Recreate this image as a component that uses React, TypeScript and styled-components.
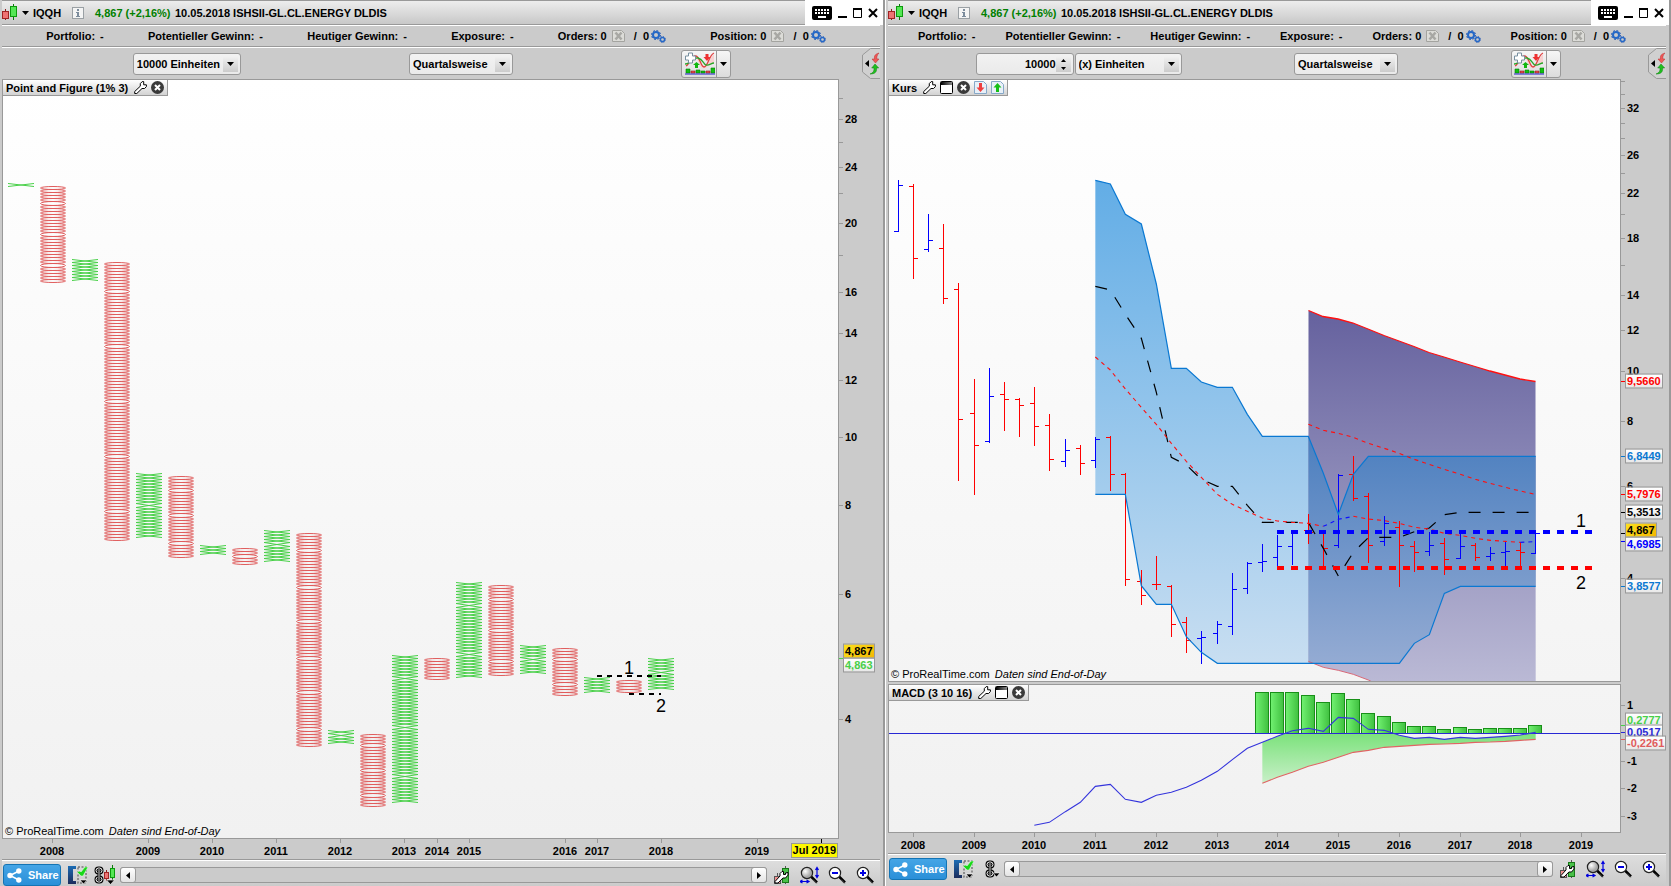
import React from "react";
import styled, { createGlobalStyle } from "styled-components";

const Global = createGlobalStyle`
  *, *::before, *::after { box-sizing: border-box; }
  body { margin: 0; background: #cbcbcb; color: #000; font: bold 11px/14px "Liberation Sans", Arial, sans-serif; }
  button, select, input { font: inherit; color: inherit; margin: 0; }
  svg { display: block; flex: none; }
`;

const LINE = "#999";

/* ---------- frame ---------- */

const Desktop = styled.main`
  display: grid;
  grid-template-columns: 885fr 786fr;
  min-height: 100vh;
`;

const Window = styled.section<{ $inset?: boolean }>`
  display: flex;
  flex-direction: column;
  min-width: 0;
  padding: 0 3px 0 2px;
  border-right: 2px solid ${LINE};
  border-left: ${(p) => (p.$inset ? "1px solid #fff" : "0")};
  background: #cbcbcb;
`;

const TitleBar = styled.header`
  display: flex;
  height: 25px;
  margin-right: -3px;
`;

const TitleMain = styled.div`
  flex: 1;
  display: flex;
  align-items: center;
  min-width: 0;
  white-space: nowrap;
  border-top: 1px solid ${LINE};
  border-bottom: 1px solid ${LINE};
  background: linear-gradient(#ededed, #c8c8c8);
`;

const Symbol = styled.h1`
  margin: 0 13px 0 1px;
  font-size: 11px;
  width: 26px;
`;

const Quote = styled.span`
  color: #008000;
  width: 80px;
  margin-left: 11px;
`;

const WindowButtons = styled.div`
  display: flex;
  align-items: center;
  gap: 6px;
  width: 78px;
  padding-left: 7px;
  background: #fff;
`;

const IconButton = styled.button<{ $w?: number }>`
  display: flex;
  flex: none;
  align-items: center;
  justify-content: center;
  padding: 0;
  border: 0;
  background: none;
  width: ${(p) => (p.$w ? p.$w + "px" : "auto")};
`;

const StatsBar = styled.div`
  display: flex;
  align-items: center;
  justify-content: space-evenly;
  height: 22px;
  padding-right: 10px;
  white-space: nowrap;
  border-top: 1px solid #fff;
  border-bottom: 1px solid ${LINE};
`;

const Stat = styled.div`
  display: flex;
  align-items: center;
  gap: 5px;
`;

const StatPair = styled.span`
  display: flex;
  align-items: center;
  gap: 2px;
  margin-left: 4px;
`;

const ToolBar = styled.div`
  display: grid;
  grid-template-columns: 7fr auto 9fr auto 9fr auto 7fr auto;
  align-items: center;
  height: 32px;
  padding-bottom: 2px;
  border-top: 1px solid #fff;
`;

const Slot = styled.div<{ $col: number }>`
  grid-column: ${(p) => p.$col};
  display: flex;
  align-items: center;
  gap: 1px;
`;

/* ---------- form controls ---------- */

const Field = styled.span<{ $w: number }>`
  position: relative;
  display: block;
  width: ${(p) => p.$w}px;
  height: 22px;
  border: 1px solid ${LINE};
  border-radius: 3px;
  background: linear-gradient(#f2f2f2, #eaeaea);
`;

const Select = styled.select`
  appearance: none;
  width: 100%;
  height: 20px;
  padding: 0 0 0 3px;
  border: 0;
  background: none;
`;

const Input = styled.input`
  width: 100%;
  height: 20px;
  padding: 0 17px 0 4px;
  border: 0;
  background: none;
  text-align: right;
`;

const FieldArrow = styled.span`
  position: absolute;
  top: 3px;
  right: 2px;
  display: flex;
  flex-direction: column;
  align-items: center;
  justify-content: center;
  gap: 5px;
  width: 15px;
  height: 15px;
  background: linear-gradient(#f0f0f0, #ccc);
  pointer-events: none;
`;

const SplitButton = styled.div`
  display: flex;
  width: 50px;
  height: 28px;
  border: 1px solid ${LINE};
  border-radius: 3px;
  background: linear-gradient(#f6f6f6, #dcdcdc);
  & > button:first-child { width: 35px; border-right: 1px solid ${LINE}; }
  & > button:last-child { flex: 1; }
`;

/* ---------- charts ---------- */

const ChartArea = styled.div<{ $axis: number; $rows: string }>`
  flex: 1;
  display: grid;
  grid-template-columns: minmax(0, 1fr) ${(p) => p.$axis}px;
  grid-template-rows: ${(p) => p.$rows};
`;

const Plot = styled.div<{ $bg: string; $row: number }>`
  grid-column: 1;
  grid-row: ${(p) => p.$row};
  position: relative;
  border: 1px solid ${LINE};
  background: ${(p) => p.$bg};
`;

const Drawing = styled.svg`
  position: absolute;
  inset: 0;
  width: 100%;
  height: 100%;
`;

const PlotTitle = styled.div`
  position: absolute;
  top: 0;
  left: 0;
  display: flex;
  align-items: center;
  gap: 4px;
  height: 16px;
  padding: 0 3px;
  white-space: nowrap;
  border-right: 1px solid ${LINE};
  border-bottom: 1px solid ${LINE};
  background: linear-gradient(#fff, #d2d2d2);
`;

const PlotName = styled.span`
  margin-right: 2px;
`;

const Copyright = styled.p`
  position: absolute;
  left: 2px;
  bottom: 0;
  margin: 0;
  font-weight: normal;
  white-space: nowrap;
  em { margin-left: 2px; }
`;

const Note = styled.span`
  position: absolute;
  transform: translate(-50%, -50%);
  font-size: 18px;
  line-height: 20px;
  font-weight: normal;
`;

const PriceAxis = styled.div<{ $row: number }>`
  grid-column: 2;
  grid-row: ${(p) => p.$row};
  position: relative;
  border: solid transparent;
  border-width: 1px 0;
`;

const TimeAxis = styled.div<{ $row: number }>`
  grid-column: 1;
  grid-row: ${(p) => p.$row};
  position: relative;
  height: 20px;
  border: solid transparent;
  border-width: 0 1px;
`;

const Tick = styled.i<{ $color?: string }>`
  position: absolute;
  left: 0;
  width: 4px;
  height: 1px;
  background: ${(p) => p.$color || LINE};
`;

const PriceLabel = styled.span`
  position: absolute;
  left: 6px;
  transform: translateY(-50%);
`;

const PriceTag = styled.span<{ $color: string; $gold?: boolean }>`
  position: absolute;
  left: 4px;
  transform: translateY(-50%);
  height: 15px;
  padding: 0 1px;
  line-height: 13px;
  border: 1px solid ${LINE};
  white-space: nowrap;
  color: ${(p) => p.$color};
  background: ${(p) => (p.$gold ? "linear-gradient(135deg, #fbe020, #f4b800)" : "linear-gradient(#fff, #e8e8e8)")};
`;

const YearTick = styled.i<{ $dark?: boolean }>`
  position: absolute;
  top: 0;
  width: 1px;
  height: 4px;
  background: ${(p) => (p.$dark ? "#000" : LINE)};
`;

const YearLabel = styled.span`
  position: absolute;
  top: 5px;
  transform: translateX(-50%);
`;

const DateTag = styled.span`
  position: absolute;
  top: 4px;
  right: 0;
  height: 15px;
  padding: 0 1px;
  line-height: 13px;
  border: 1px solid ${LINE};
  background: #fdf800;
`;

/* ---------- bottom bar ---------- */

const BottomBar = styled.footer<{ $h: number }>`
  display: flex;
  align-items: flex-start;
  height: ${(p) => p.$h}px;
  padding: 4px 4px 0 1px;
  border-top: 1px solid ${LINE};
  box-shadow: inset 0 1px #fff;
  background: linear-gradient(#dedede, #cbcbcb);
`;

const BarRow = styled.div`
  flex: 1;
  display: flex;
  align-items: center;
  height: 22px;
`;

const Share = styled.button`
  display: flex;
  align-items: center;
  gap: 6px;
  width: 58px;
  height: 22px;
  padding: 0 3px;
  border: 1px solid #1474b4;
  border-radius: 3px;
  color: #fff;
  background: linear-gradient(#45a5e6, #2a8fd8);
`;

const LinkTools = styled.div<{ $gap: number }>`
  display: flex;
  align-items: center;
  gap: ${(p) => p.$gap}px;
  margin: 0 4px 0 7px;
`;

const ScrollBar = styled.div`
  flex: 1;
  display: flex;
  justify-content: space-between;
  height: 16px;
  border: 1px solid ${LINE};
  border-radius: 3px;
  background: #cbcbcb;
`;

const ScrollButton = styled.button`
  display: flex;
  align-items: center;
  justify-content: center;
  width: 16px;
  height: 16px;
  margin: -1px;
  padding: 0;
  border: 1px solid ${LINE};
  border-radius: 3px;
  background: linear-gradient(#fff, #e4e4e4);
`;

const ZoomTools = styled.div`
  display: flex;
  align-items: center;
  gap: 8px;
  margin-left: 5px;
`;

/* ---------- icons ---------- */

const Down = ({ w = 7 }: { w?: number }) => (
  <svg width={w} height={4} viewBox="0 0 7 4"><path d="M0 0h7L3.5 4z" /></svg>
);
const Spin = ({ up }: { up?: boolean }) => (
  <svg width="5" height="3" viewBox="0 0 5 3"><path d={up ? "M0 3h5L2.500 0z" : "M0 0h5L2.500 3z"} /></svg>
);
const Side = ({ right }: { right?: boolean }) => (
  <svg width="4" height="7" viewBox="0 0 4 7"><path d={right ? "M0 0v7l4-3.500z" : "M4 0v7L0 3.500z"} /></svg>
);
const Candles = () => (
  <svg width="16" height="17" viewBox="0 0 16 17">
    <path d="M3.500 5v11" stroke="#8c1c1c" />
    <rect x=".5" y="7.500" width="6" height="7" fill="#ee7474" stroke="#a02424" />
    <path d="M11.500 0v16" stroke="#0a7a0a" />
    <rect x="8.500" y="2.500" width="6" height="10" fill="#54e654" stroke="#0c9a0c" />
  </svg>
);
const Info = () => (
  <svg width="12" height="12" viewBox="0 0 12 12">
    <rect x=".5" y=".5" width="11" height="11" fill="#f4f4f4" stroke="#9aa0a4" />
    <path d="M5 2h2v2H5zM4 5h3v4h1v1H4V9h1V6H4z" fill="#7c8c9c" />
  </svg>
);
const Keyboard = () => (
  <svg width="20" height="14" viewBox="0 0 20 14">
    <rect width="20" height="14" rx="2" />
    <path d="M3 4h14M3 7h14" stroke="#fff" strokeWidth="2" strokeDasharray="2 1" />
    <path d="M6 11h8" stroke="#fff" strokeWidth="2" />
  </svg>
);
const Minimise = () => <svg width="9" height="10" viewBox="0 0 9 10"><path d="M0 9h9" stroke="#000" strokeWidth="2" /></svg>;
const Maximise = () => <svg width="9" height="10" viewBox="0 0 9 10"><path d="M.5 0v9.500h8V0M0 1h9" fill="none" stroke="#000" /><path d="M0 1h9" stroke="#000" strokeWidth="2" /></svg>;
const Cross = () => <svg width="10" height="10" viewBox="0 0 10 10"><path d="M1 1l8 8M9 1L1 9" stroke="#000" strokeWidth="2" /></svg>;
const Wrench = () => (
  <svg width="13" height="13" viewBox="0 0 13 13">
    <path d="M.7 10.500L6.300 5.200V2.600L8.200.6h1.500v3.200h2.700v1.800l-1.800 1.900H8L2.800 12.500H.7z" fill="#fff" stroke="#000" />
  </svg>
);
const Pane = () => (
  <svg width="13" height="13" viewBox="0 0 13 13">
    <rect x=".5" y=".5" width="12" height="12" rx="1" fill="#fff" stroke="#000" />
    <path d="M1 1h11v3H1z" fill="url(#pane)" />
  </svg>
);
const Close = () => (
  <svg width="13" height="13" viewBox="0 0 13 13">
    <circle cx="6.500" cy="6.500" r="6.500" fill="#3a3a3a" />
    <path d="M4 4l5 5M9 4L4 9" stroke="#fff" strokeWidth="2" />
  </svg>
);
const DocArrow = ({ up }: { up?: boolean }) => (
  <svg width="13" height="13" viewBox="0 0 13 13">
    <path d="M.5.5h9l3 3v9H.5z" fill="#e8f0f8" stroke="#86a8c8" />
    <path d={up ? "M6.500 2l4 4.500H8V11H5V6.500H2.500z" : "M6.500 11l4-4.500H8V2H5v4.500H2.500z"} fill={up ? "#18c018" : "#ee4040"} />
  </svg>
);
const DisabledX = () => (
  <svg width="13" height="12" viewBox="0 0 13 12">
    <path d="M.5.5h9l3 3v8H.5z" fill="#dcdcd8" stroke="#a4a4a0" />
    <path d="M3.500 2.500l6 7M9.500 2.500l-6 7" stroke="#a8a8a4" strokeWidth="2.600" />
  </svg>
);
const Gears = () => (
  <svg width="15" height="13" viewBox="0 0 15 13">
    <circle cx="5" cy="5" r="3" fill="none" stroke="#2468c8" strokeWidth="2" />
    <circle cx="5" cy="5" r="4.500" fill="none" stroke="#1c54b4" strokeWidth="1" strokeDasharray="1.800 1.734" />
    <circle cx="11.500" cy="9.500" r="2" fill="none" stroke="#2468c8" strokeWidth="1.300" />
    <circle cx="11.500" cy="9.500" r="3" fill="none" stroke="#1c54b4" strokeWidth=".9" strokeDasharray="1.200 1.156" />
  </svg>
);
const Indicators = () => (
  <svg width="31" height="23" viewBox="0 0 31 23">
    <path d="M10 5c5-7 7 13 11 10s5-9 9-13v10c-5-2-9 8-13 3S14 4 10 5z" fill="#f8d0d0" />
    <path d="M2 14c4-2 6-12 10-10 4 1 5 11 8 11 4 0 5-12 10-14" fill="none" stroke="#e04040" strokeWidth="1.300" />
    <path d="M1 12c5 0 8-7 13-6s5 6 8 7 5-2 8-2" fill="none" stroke="#28a828" strokeWidth="1.300" />
    <path d="M4.500 1h4v3h3v4h-3v3h-4V8h-3V4h3z" fill="#fff" stroke="#7890a0" />
    <path d="M12.500 10l3.500 3h-2v3h-3v-3h-2z" fill="#10b810" />
    <path d="M21.500 2h3v3h2L23 9l-3.500-4h2z" fill="#ee3030" />
    <path d="M2 17h4v4H2zM12 18h4v3h-4zM17 19h4v2h-4zM27 16h4v5h-4z" fill="#10c010" stroke="#087808" strokeWidth=".6" />
    <path d="M7 19h4v2H7zM22 19h4v2h-4z" fill="#ee5050" stroke="#881818" strokeWidth=".6" />
    <path d="M1 22h30" stroke="#2020c8" />
  </svg>
);
const Drawer = () => (
  <svg width="18" height="31" viewBox="0 0 18 31">
    <path d="M18 .5H8.500L.5 7v17l8 6.500H18" fill="#d0d0d0" stroke={LINE} />
    <path d="M7 12v7l-4-3.500z" />
    <path d="M17 5c-4 1-5 3-4.500 6H10l3.500 4 3.500-4h-2c-.5-2 0-4 2-6z" fill="#f05858" stroke="#b83030" strokeWidth=".5" />
    <path d="M8 26c5 0 7-2 6.500-6h2.200L13 16l-3.300 4H12c.4 3-1 5-4 6z" fill="#20c020" stroke="#108010" strokeWidth=".5" />
  </svg>
);
const ShareGlyph = () => (
  <svg width="15" height="15" viewBox="0 0 15 15">
    <path d="M12 3L3 7.500 12 12" fill="none" stroke="#fff" strokeWidth="1.600" />
    <circle cx="11.800" cy="3" r="2.700" fill="#fff" /><circle cx="3" cy="7.500" r="2.700" fill="#fff" /><circle cx="11.800" cy="12" r="2.700" fill="#fff" />
  </svg>
);
const Templates = () => (
  <svg width="20" height="18" viewBox="0 0 20 18">
    <path d="M0 0h8v3H5v12h3v3H0z" fill="url(#book)" />
    <path d="M10 1h8v16h-8z" fill="none" stroke="#777" strokeWidth="1.500" strokeDasharray="2 1.500" />
    <path d="M9 6l3-1 1 1 4-5h3l-5 9h-2z" fill="#18d818" stroke="#e8ffe8" strokeWidth=".5" />
    <path d="M12 14h7l-3.500 4z" stroke="#fff" strokeWidth=".6" />
  </svg>
);
const Chain = ({ arrow }: { arrow?: boolean }) => (
  <svg width={arrow ? 15 : 10} height="18" viewBox={arrow ? "0 0 15 18" : "0 0 10 18"}>
    <g fill="none" stroke="#000" strokeWidth="3"><rect x="2" y="2" width="6" height="5" rx="2.500" /><rect x="2" y="11" width="6" height="5" rx="2.500" /></g>
    <g fill="none" stroke="#fff" strokeWidth="1"><rect x="2" y="2" width="6" height="5" rx="2.500" /><rect x="2" y="11" width="6" height="5" rx="2.500" /></g>
    <path d="M5 4.500v9" stroke="#000" strokeWidth="3" /><path d="M5 5v8" stroke="#ddd" />
    {arrow && <path d="M8 13h7l-3.500 4z" stroke="#fff" strokeWidth=".6" />}
  </svg>
);
const CandleMenu = () => (
  <svg width="12" height="20" viewBox="0 0 12 20">
    <path d="M2.500 5v11" stroke="#8c1c1c" /><rect x=".5" y="7.500" width="4" height="6" fill="#ee7474" stroke="#a02424" />
    <path d="M8.500 0v15" stroke="#0a7a0a" /><rect x="6.500" y="3.500" width="4" height="9" fill="#54e654" stroke="#0c9a0c" />
    <path d="M2.500 15h8l-4 4.500z" stroke="#fff" strokeWidth=".6" />
  </svg>
);
const ChartSettings = () => (
  <svg width="20" height="18" viewBox="0 0 20 18">
    <path d="M5.500 7v11M13.500 0v18" stroke="#555" />
    <rect x="2.500" y="10.500" width="6" height="7" fill="#f09090" stroke="#555" />
    <rect x="10.500" y="2.500" width="6" height="14" fill="#48c048" stroke="#187818" />
    <path d="M3 15.500L8 10V7.500L10 5.500h1.500v3h2V7L16 6.500v2.600L13.500 12h-2.600L6 17H3z" fill="#fff" stroke="#000" />
  </svg>
);
const Lens = ({ sign, fit }: { sign?: string; fit?: boolean }) => (
  <svg width="20" height="18" viewBox="0 0 20 18">
    <path d="M11 10.500l6 6" stroke="#000" strokeWidth="2.500" />
    <path d="M13 13.500l4 4" stroke="#888" strokeWidth=".6" />
    <circle cx="7" cy="7" r="5.600" fill={fit ? "url(#glass)" : "#fff"} stroke="#222" strokeWidth="1.200" />
    {sign && <path d={sign} stroke="#0000e0" strokeWidth="2" />}
    {fit && <path d="M17 2v9M15.500 4L17 1.500 18.500 4M15.500 9l1.500 2.500L18.500 9M0 15.500h9M2.500 14L0 15.500 2.500 17M6.500 14L9 15.500 6.500 17" fill="none" stroke="#0000e0" strokeWidth="1.200" />}
  </svg>
);

/* ---------- chart data ---------- */

type Pt = [number, number];
type Box = { x: number; y: number; w: number; h: number };

const pctX = (b: Box, x: number) => `${((x - b.x) / b.w) * 100}%`;
const pctY = (b: Box, y: number) => `${((y - b.y) / b.h) * 100}%`;
const viewBox = (b: Box) => `${b.x} ${b.y} ${b.w} ${b.h}`;
const line = (pts: Pt[]) => pts.map((p) => p.join(",")).join(" ");
/** Points recorded on a grid three times as fine as the plot units. */
const fine = (ox: number, oy: number, pts: Pt[]): Pt[] => pts.map(([x, y]) => [ox + x / 3, oy + y / 3]);

const PF: Box = { x: 3, y: 80, w: 835, h: 758 };
const PX: Box = { x: 889, y: 80, w: 731, h: 601 };
const MC: Box = { x: 889, y: 685, w: 731, h: 147 };

const pfY = (v: number) => Math.round(719 - 308.3 * Math.log(v / 4));
const pxY = (v: number) => Math.round(578 - 226 * Math.log(v / 4));

const PF_COLUMNS: Pt[] = [
  [183, 186], [186, 282], [259, 280], [262, 540], [473, 537], [476, 557], [545, 554], [548, 564], [530, 561],
  [533, 746], [730, 743], [734, 806], [655, 802], [658, 679], [582, 677], [585, 675], [645, 673], [648, 695],
  [677, 692], [680, 692], [658, 689],
];
const PF_YEARS: [string, number][] = [
  ["2008", 52], ["2009", 148], ["2010", 212], ["2011", 276], ["2012", 340], ["2013", 404], ["2014", 437],
  ["2015", 469], ["2016", 565], ["2017", 597], ["2018", 661], ["2019", 757],
];
const PX_YEARS: [string, number][] = [
  ["2008", 913], ["2009", 974], ["2010", 1034], ["2011", 1095], ["2012", 1156], ["2013", 1217], ["2014", 1277],
  ["2015", 1338], ["2016", 1399], ["2017", 1460], ["2018", 1520], ["2019", 1581],
];

// x, high, low, open, close, direction
type Bar = [number, number, number, number, number, 0 | 1];
const BARS_A: Bar[] = [
  [55, 60, 214, 214, 76, 1], [100, 72, 356, 79, 295, 0], [145, 162, 275, 268, 241, 1], [190, 192, 429, 265, 415, 0],
  [235, 370, 962, 388, 778, 0], [283, 657, 1004, 760, 856, 0], [328, 625, 848, 844, 709, 1], [373, 666, 812, 703, 718, 0],
  [418, 714, 828, 718, 736, 0], [463, 681, 857, 730, 799, 0], [508, 763, 932, 796, 898, 0], [556, 837, 920, 904, 871, 1],
  [601, 855, 944, 865, 910, 0], [646, 832, 923, 901, 838, 1], [691, 828, 992, 832, 943, 0], [736, 939, 1277, 943, 1258, 0],
  [784, 1230, 1334, 1264, 1306, 0], [829, 1188, 1288, 1273, 1273, 0], [874, 1276, 1430, 1279, 1393, 0],
  [919, 1371, 1478, 1387, 1441, 0], [964, 1413, 1511, 1435, 1433, 1], [1012, 1383, 1451, 1420, 1393, 1],
  [1057, 1239, 1424, 1399, 1288, 1], [1102, 1206, 1301, 1285, 1210, 1], [1147, 1152, 1235, 1207, 1204, 1],
  [1192, 1125, 1218, 1192, 1159, 1],
];
const BARS_B: Bar[] = [
  [187, 456, 554, 499, 456, 1], [235, 402, 491, 451, 456, 0], [280, 460, 560, 460, 505, 0], [325, 283, 502, 496, 286, 1],
  [370, 228, 362, 283, 355, 0], [415, 339, 548, 349, 496, 0], [463, 408, 497, 484, 430, 1], [508, 424, 620, 442, 496, 0],
  [553, 484, 573, 499, 517, 0], [598, 458, 527, 514, 496, 1], [643, 475, 584, 490, 538, 0], [691, 460, 535, 535, 499, 1],
  [736, 490, 540, 496, 532, 0], [781, 502, 540, 529, 520, 1], [826, 486, 560, 517, 514, 1], [871, 487, 565, 511, 517, 0],
  [916, 460, 520, 520, 460, 1],
];

const barPath = (bars: Bar[], ox: number, oy: number, dir: 0 | 1) =>
  bars.filter((b) => b[5] === dir).map(([x, h, l, o, c]) => {
    const px = Math.floor(ox + x / 3) + 0.5;
    const y = (v: number) => Math.floor(oy + v / 3);
    return `M${px} ${y(h)}V${y(l) + 1}M${px - 4.5} ${y(o) + 0.5}h4M${px} ${y(c) + 0.5}h4.5`;
  }).join("");

const bandTopA = fine(880, 160, [[646, 61], [691, 72], [736, 163], [784, 192], [829, 372], [874, 625], [919, 625], [964, 666], [1012, 682], [1057, 682], [1102, 763], [1147, 829], [1285, 829]]);
const bandTopB = fine(1230, 380, [[235, 169], [280, 280], [325, 403], [370, 283], [415, 229], [917, 229]]);
const bandLowA = fine(880, 160, [[646, 1003], [736, 1003], [784, 1277], [829, 1333], [874, 1333], [919, 1430], [964, 1477], [1012, 1510], [1285, 1510]]);
const bandLowB = fine(1230, 380, [[235, 850], [508, 850], [553, 790], [598, 764], [643, 640], [691, 619], [917, 619]]);
const purpleTop: Pt[] = [[1308.5, 310.5], [1323, 316.5], [1338, 319], [1353, 323], [1368, 329], [1384, 335.5], [1399, 341], [1414, 346.5], [1429, 352.5], [1444, 357], [1460, 362], [1475, 366.5], [1490, 371], [1505, 375], [1520, 379], [1535.5, 381.5]];
const purpleLow = fine(1230, 380, [[235, 844], [280, 862], [325, 871], [370, 883], [415, 900], [427, 906]]);
const longMean = fine(1230, 380, [[235, 133], [280, 151], [325, 160], [370, 172], [415, 190], [463, 205], [508, 220], [553, 238], [598, 253], [643, 268], [691, 283], [736, 298], [781, 310], [826, 322], [871, 333], [916, 343]]);
const midline = [
  ...fine(880, 160, [[646, 379], [691, 390], [736, 463], [784, 535], [829, 697], [874, 892], [919, 915], [964, 958], [1012, 979], [1057, 979], [1102, 1036], [1147, 1087]]),
  ...fine(1230, 380, [[235, 427], [280, 505], [325, 588], [370, 517], [415, 473], [463, 472], [508, 472], [553, 455], [598, 444], [643, 404], [691, 397], [916, 397]]),
];
const meanDown = [
  ...fine(880, 160, [[646, 591], [691, 630], [736, 687], [784, 742], [829, 793], [874, 850], [919, 904], [964, 952], [1012, 1003], [1057, 1033], [1102, 1054], [1147, 1074], [1192, 1083], [1237, 1087]]),
  ...fine(1230, 380, [[235, 430], [280, 439]]),
];
const meanUp = fine(1230, 380, [[280, 439], [325, 418], [370, 409]]);
const meanDown2 = fine(1230, 380, [[370, 409], [415, 417], [463, 422], [508, 430], [553, 442], [598, 447], [643, 460], [691, 466], [736, 475], [781, 481], [826, 484], [871, 487]]);
const meanUp2 = fine(1230, 380, [[871, 487], [916, 485]]);

const macd = [
  ...fine(880, 660, [[463, 496], [508, 487], [556, 455], [601, 427], [646, 379], [691, 373], [736, 418], [784, 427], [829, 406], [874, 397], [919, 382], [964, 361], [1012, 334], [1057, 299], [1102, 265]]),
  ...fine(1230, 680, [[97, 187], [142, 169], [187, 152], [235, 145], [280, 154], [325, 112], [370, 115], [415, 148], [463, 151], [508, 166], [553, 175], [598, 172], [643, 178], [691, 172], [736, 175], [781, 172], [826, 169], [871, 165], [917, 157]]),
];
const signal = fine(1230, 680, [[97, 310], [142, 292], [187, 277], [235, 259], [280, 247], [325, 232], [370, 217], [415, 211], [463, 202], [508, 199], [553, 196], [598, 193], [643, 192], [691, 190], [736, 187], [781, 186], [826, 184], [871, 181], [917, 178]]);
const cloudTop = fine(1230, 680, [[97, 187], [142, 169], [166, 161], [493, 161], [508, 166], [553, 175], [598, 172], [643, 178], [691, 172], [736, 175], [781, 172], [826, 169], [871, 165], [917, 157]]);
const HISTOGRAM: Pt[] = [[76, 37], [121, 37], [166, 37], [214, 46], [259, 67], [304, 40], [349, 58], [394, 100], [442, 109], [487, 127], [532, 139], [577, 139], [622, 148], [670, 142], [715, 148], [760, 145], [805, 145], [850, 145], [895, 136]];

const pfPath = ([top, bottom]: Pt, i: number) => {
  const cx = 21 + 32 * i;
  const n = Math.max(1, Math.round((bottom - top) / 3.07));
  let d = "";
  for (let k = 0; k < n; k++) {
    const a = Math.round(top + ((bottom - top) * k) / n) + 0.5;
    const b = Math.round(top + ((bottom - top) * (k + 1)) / n) + 0.5;
    d += i % 2
      ? `M${cx - 12.5} ${(a + b) / 2}a12.5 ${(b - a) / 2} 0 0 1 25 0a12.5 ${(b - a) / 2} 0 0 1 -25 0`
      : `M${cx - 13} ${a}L${cx + 13} ${b}M${cx - 13} ${b}L${cx + 13} ${a}`;
  }
  return d;
};

/* ---------- composed parts ---------- */

const HiddenSvg = styled.svg`
  position: absolute;
`;

const Defs = () => (
  <HiddenSvg width="0" height="0" aria-hidden="true">
    <defs>
      <linearGradient id="pane"><stop offset="0" stopColor="#000" /><stop offset="1" stopColor="#888" /></linearGradient>
      <linearGradient id="book" x2="0" y2="1"><stop offset="0" stopColor="#1c6cb4" /><stop offset="1" stopColor="#1c2c5c" /></linearGradient>
      <radialGradient id="glass" cx=".35" cy=".35"><stop offset="0" stopColor="#fff" /><stop offset="1" stopColor="#a8a8a8" /></radialGradient>
    </defs>
  </HiddenSvg>
);

const Header = () => (
  <>
    <TitleBar>
      <TitleMain>
        <Candles />
        <IconButton $w={14} aria-label="Instrument wählen"><Down /></IconButton>
        <Symbol>IQQH</Symbol>
        <IconButton aria-label="Info"><Info /></IconButton>
        <Quote>4,867 (+2,16%)</Quote>
        <span>10.05.2018 ISHSII-GL.CL.ENERGY DLDIS</span>
      </TitleMain>
      <WindowButtons>
        <IconButton aria-label="Tastatur"><Keyboard /></IconButton>
        <IconButton aria-label="Minimieren"><Minimise /></IconButton>
        <IconButton aria-label="Maximieren"><Maximise /></IconButton>
        <IconButton aria-label="Schließen"><Cross /></IconButton>
      </WindowButtons>
    </TitleBar>
    <StatsBar>
      {["Portfolio:", "Potentieller Gewinn:", "Heutiger Gewinn:", "Exposure:"].map((s) => (
        <Stat key={s}>{s} <span>-</span></Stat>
      ))}
      {["Orders: 0", "Position: 0"].map((s) => (
        <Stat key={s}>
          {s}
          <IconButton aria-label="Löschen"><DisabledX /></IconButton>
          <StatPair>/ &nbsp;0 <IconButton aria-label="Automatisch"><Gears /></IconButton></StatPair>
        </Stat>
      ))}
    </StatsBar>
  </>
);

const Dropdown = ({ label, value, width }: { label: string; value: string; width: number }) => (
  <Field $w={width}>
    <Select aria-label={label}><option>{value}</option></Select>
    <FieldArrow><Down /></FieldArrow>
  </Field>
);

const Tools = ({ children }: { children: React.ReactNode }) => (
  <ToolBar>
    <Slot $col={2}>{children}</Slot>
    <Slot $col={4}><Dropdown label="Zeiteinheit" value="Quartalsweise" width={104} /></Slot>
    <Slot $col={6}>
      <SplitButton>
        <IconButton aria-label="Indikator hinzufügen"><Indicators /></IconButton>
        <IconButton aria-label="Indikatormenü"><Down /></IconButton>
      </SplitButton>
    </Slot>
    <Slot $col={8}><IconButton aria-label="Handel öffnen"><Drawer /></IconButton></Slot>
  </ToolBar>
);

const Prices = ({ box, scale, ticks, labels }: { box: Box; scale: (v: number) => number; ticks: number[]; labels: number[] }) => (
  <>
    {ticks.map((v) => <Tick key={"t" + v} style={{ top: pctY(box, scale(v)) }} />)}
    {labels.map((v) => <PriceLabel key={v} style={{ top: pctY(box, scale(v)) }}>{v}</PriceLabel>)}
  </>
);

// text, tag centre, marker position, colour
type Tag = [string, number, number, string];
const Tags = ({ box, tags }: { box: Box; tags: Tag[] }) => (
  <>
    {tags.map(([t, y, m, c]) => (
      <React.Fragment key={t}>
        <Tick $color={c} style={{ top: pctY(box, m) }} />
        <PriceTag $color={c} $gold={t === "4,867"} style={{ top: pctY(box, y) }}>{t}</PriceTag>
      </React.Fragment>
    ))}
  </>
);

const Years = ({ box, years }: { box: Box; years: [string, number][] }) => (
  <>
    {years.map(([t, x]) => (
      <React.Fragment key={t}>
        <YearTick style={{ left: pctX(box, x) }} />
        <YearLabel style={{ left: pctX(box, x) }}>{t}</YearLabel>
      </React.Fragment>
    ))}
  </>
);

const Credits = () => <Copyright>© ProRealTime.com <em>Daten sind End-of-Day</em></Copyright>;

const Bottom = ({ height, linked }: { height: number; linked?: boolean }) => (
  <BottomBar $h={height}>
    <BarRow>
      <Share><ShareGlyph />Share</Share>
      <LinkTools $gap={linked ? 6 : 11}>
        <IconButton aria-label="Vorlagen"><Templates /></IconButton>
        <IconButton aria-label="Verknüpfen"><Chain arrow={!linked} />{linked && <CandleMenu />}</IconButton>
      </LinkTools>
      <ScrollBar>
        <ScrollButton aria-label="Zurück"><Side /></ScrollButton>
        <ScrollButton aria-label="Vor"><Side right /></ScrollButton>
      </ScrollBar>
      <ZoomTools>
        <IconButton aria-label="Einstellungen"><ChartSettings /></IconButton>
        <IconButton aria-label="Anpassen"><Lens fit /></IconButton>
        <IconButton aria-label="Verkleinern"><Lens sign="M4 7h6" /></IconButton>
        <IconButton aria-label="Vergrößern"><Lens sign="M4 7h6M7 4v6" /></IconButton>
      </ZoomTools>
    </BarRow>
  </BottomBar>
);

const PointAndFigure = () => (
  <ChartArea $axis={41} $rows="minmax(300px, 1fr) auto">
    <Plot $row={1} $bg="linear-gradient(#fff, #f1f1f1)">
      <Drawing viewBox={viewBox(PF)} preserveAspectRatio="none">
        {PF_COLUMNS.map((c, i) => <path key={i} d={pfPath(c, i)} fill="none" stroke={i % 2 ? "#e05c5c" : "#48d048"} />)}
        <path d="M597 676h64M629 694h32" stroke="#000" strokeWidth="2" strokeDasharray="5 5" />
      </Drawing>
      <PlotTitle>
        <PlotName>Point and Figure (1% 3)</PlotName>
        <IconButton aria-label="Einstellungen"><Wrench /></IconButton>
        <IconButton aria-label="Schließen"><Close /></IconButton>
      </PlotTitle>
      <Note style={{ left: pctX(PF, 629), top: pctY(PF, 668) }}>1</Note>
      <Note style={{ left: pctX(PF, 661), top: pctY(PF, 706) }}>2</Note>
      <Credits />
    </Plot>
    <PriceAxis $row={1}>
      <Prices box={PF} scale={pfY} ticks={[30, 28, 26, 24, 22, 20, 18, 16, 14, 12, 10, 8, 6, 4]} labels={[28, 24, 20, 16, 14, 12, 10, 8, 6, 4]} />
      <Tags box={PF} tags={[["4,863", 665, 658, "#48d048"], ["4,867", 651, 658, "#000"]]} />
      <Tick $color="#48d048" style={{ top: pctY(PF, 658) }} />
    </PriceAxis>
    <TimeAxis $row={2}>
      <Years box={PF} years={PF_YEARS} />
      <YearTick $dark style={{ left: pctX(PF, 821) }} />
      <DateTag>Jul 2019</DateTag>
    </TimeAxis>
  </ChartArea>
);

const PriceChart = () => (
  <Drawing viewBox={viewBox(PX)} preserveAspectRatio="none">
    <defs>
      <linearGradient id="blue" gradientUnits="userSpaceOnUse" x1="0" y1="180" x2="0" y2="664"><stop offset="0" stopColor="#62ade6" /><stop offset="1" stopColor="#c8def1" /></linearGradient>
      <linearGradient id="purple" gradientUnits="userSpaceOnUse" x1="0" y1="310" x2="0" y2="681"><stop offset="0" stopColor="#65619e" /><stop offset="1" stopColor="#bab9d5" /></linearGradient>
      <linearGradient id="mix" gradientUnits="userSpaceOnUse" x1="0" y1="436" x2="0" y2="664"><stop offset="0" stopColor="#4c7fbf" /><stop offset="1" stopColor="#94abd3" /></linearGradient>
    </defs>
    <polygon points={line([...purpleTop, [1535.7, 681], ...[...purpleLow].reverse()])} fill="url(#purple)" />
    <polygon points={line([...bandTopA, ...[...bandLowA].reverse()])} fill="url(#blue)" />
    <polygon points={line([...bandTopB, ...[...bandLowB].reverse()])} fill="url(#mix)" />
    <g fill="none">
      <polyline points={line(purpleTop)} stroke="#ff1010" strokeWidth="1.3" />
      <polyline points={line(purpleLow)} stroke="#d86878" />
      <path d={barPath(BARS_A, 880, 160, 0) + barPath(BARS_B, 1230, 380, 0)} stroke="#f00" />
      <path d={barPath(BARS_A, 880, 160, 1) + barPath(BARS_B, 1230, 380, 1)} stroke="#00f" />
      <polyline points={line([...bandTopA, ...bandTopB])} stroke="#0a78d2" strokeWidth="1.2" />
      <polyline points={line([...bandLowA, ...bandLowB])} stroke="#0a78d2" strokeWidth="1.2" />
      <polyline points={line(midline)} stroke="#000" strokeWidth="1.2" strokeDasharray="12 12" />
      <g strokeDasharray="4 4" strokeWidth="1.1">
        <polyline points={line(longMean)} stroke="#ff1010" />
        <polyline points={line(meanDown)} stroke="#ff1010" />
        <polyline points={line(meanUp)} stroke="#1010ff" />
        <polyline points={line(meanDown2)} stroke="#ff1010" />
        <polyline points={line(meanUp2)} stroke="#1010ff" />
      </g>
      <path d="M1277 532h315" stroke="#00f" strokeWidth="4" strokeDasharray="7 7" />
      <path d="M1277 568h315" stroke="#f00" strokeWidth="4" strokeDasharray="7 7" />
    </g>
  </Drawing>
);

const MacdChart = () => (
  <Drawing viewBox={viewBox(MC)} preserveAspectRatio="none">
    <defs>
      <linearGradient id="bar"><stop offset="0" stopColor="#72f272" /><stop offset="1" stopColor="#40c040" /></linearGradient>
      <linearGradient id="cloud" gradientUnits="userSpaceOnUse" x1="0" y1="733" x2="0" y2="783"><stop offset="0" stopColor="#7be27b" /><stop offset="1" stopColor="#c8efc8" /></linearGradient>
    </defs>
    <polygon points={line([...cloudTop, ...[...signal].reverse()])} fill="url(#cloud)" />
    {HISTOGRAM.map(([x, y]) => {
      const left = Math.floor(1230 + x / 3) + 0.5;
      const top = Math.floor(680 + y / 3) + 0.5;
      return <rect key={x} x={left} y={top} width="13" height={733.5 - top} fill="url(#bar)" stroke="#189018" />;
    })}
    <path d="M889 733.500h731" stroke="#2828d4" />
    <polyline points={line(macd)} fill="none" stroke="#3434dc" strokeWidth="1.1" />
    <polyline points={line(signal)} fill="none" stroke="#e06464" strokeWidth="1.1" />
  </Drawing>
);

const PriceAndMacd = () => (
  <ChartArea $axis={45} $rows="minmax(240px, 603fr) 2px minmax(60px, 149fr) auto">
    <Plot $row={1} $bg="linear-gradient(#fff, #f4f4f4)">
      <PriceChart />
      <PlotTitle>
        <PlotName>Kurs</PlotName>
        <IconButton aria-label="Einstellungen"><Wrench /></IconButton>
        <IconButton aria-label="Fenster"><Pane /></IconButton>
        <IconButton aria-label="Schließen"><Close /></IconButton>
        <IconButton aria-label="Nach unten"><DocArrow /></IconButton>
        <IconButton aria-label="Nach oben"><DocArrow up /></IconButton>
      </PlotTitle>
      <Note style={{ left: pctX(PX, 1581), top: pctY(PX, 521) }}>1</Note>
      <Note style={{ left: pctX(PX, 1581), top: pctY(PX, 583) }}>2</Note>
      <Credits />
    </Plot>
    <PriceAxis $row={1}>
      <Prices box={PX} scale={pxY} ticks={[36, 34, 32, 30, 28, 26, 24, 22, 20, 18, 16, 14, 12, 10, 8, 6, 4]} labels={[32, 26, 22, 18, 14, 12, 10, 8, 6, 4]} />
      <Tags box={PX} tags={[
        ["9,5660", 381, 381, "#f00"], ["6,8449", 456, 456, "#0a78d2"], ["5,7976", 494, 494, "#f00"],
        ["5,3513", 512, 512, "#000"], ["4,6985", 544, 541, "#00f"], ["4,867", 530, 533, "#000"], ["3,8577", 586, 586, "#0a78d2"],
      ]} />
    </PriceAxis>
    <Plot $row={3} $bg="linear-gradient(#f4f4f4, #f1f1f1)">
      <MacdChart />
      <PlotTitle>
        <PlotName>MACD (3 10 16)</PlotName>
        <IconButton aria-label="Einstellungen"><Wrench /></IconButton>
        <IconButton aria-label="Fenster"><Pane /></IconButton>
        <IconButton aria-label="Schließen"><Close /></IconButton>
      </PlotTitle>
    </Plot>
    <PriceAxis $row={3}>
      <Prices box={MC} scale={(v) => Math.round(733 - 27.7 * v)} ticks={[1, -1, -2, -3]} labels={[1, -1, -2, -3]} />
      <Tags box={MC} tags={[["0,2777", 720, 725, "#48d048"], ["0,0517", 732, 732, "#2828d4"], ["-0,2261", 743, 739, "#e05c5c"]]} />
    </PriceAxis>
    <TimeAxis $row={4}><Years box={PX} years={PX_YEARS} /></TimeAxis>
  </ChartArea>
);

export default function App() {
  return (
    <>
      <Global />
      <Defs />
      <Desktop>
        <Window>
          <Header />
          <Tools><Dropdown label="Anzahl" value="10000 Einheiten" width={108} /></Tools>
          <PointAndFigure />
          <Bottom height={27} linked />
        </Window>
        <Window $inset>
          <Header />
          <Tools>
            <Field $w={98}>
              <Input aria-label="Menge" inputMode="numeric" defaultValue="10000" />
              <FieldArrow><Spin up /><Spin /></FieldArrow>
            </Field>
            <Dropdown label="Einheit" value="(x) Einheiten" width={107} />
          </Tools>
          <PriceAndMacd />
          <Bottom height={33} />
        </Window>
      </Desktop>
    </>
  );
}
